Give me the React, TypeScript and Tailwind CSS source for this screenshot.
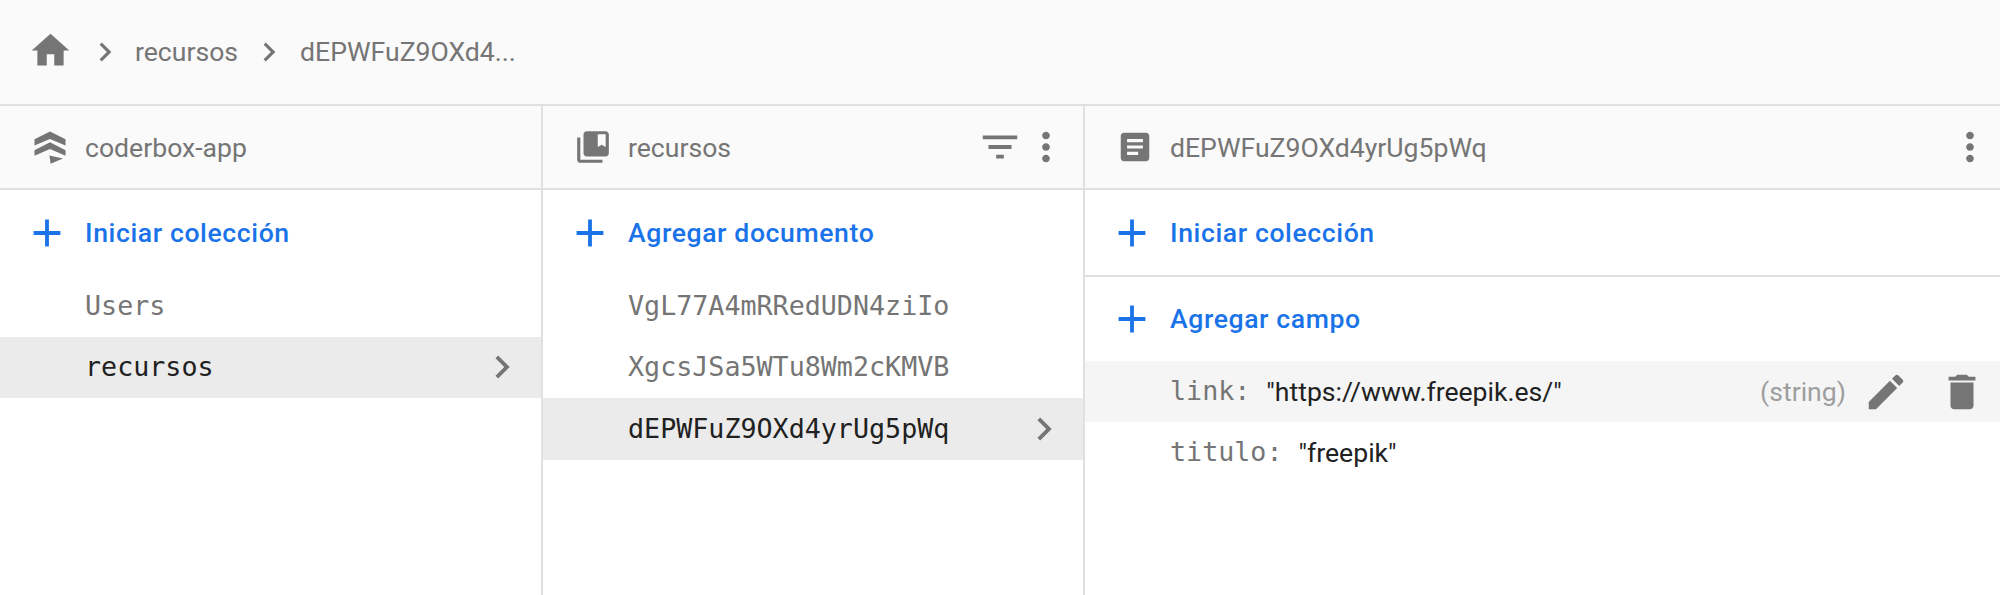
const Icon = ({ d, className }: { d: string; className: string }) => (
    <svg viewBox="0 0 24 24" fill="currentColor" className={className}>
        <path d={d} />
    </svg>
);

const HOME = "M10 20v-6h4v6h5v-8h3L12 3 2 12h3v8z";
const CHEVRON = "M10 6L8.59 7.41 13.17 12l-4.58 4.59L10 18l6-6z";
const PLUS = "M19 13h-6v6h-2v-6H5v-2h6V5h2v6h6v2z";
const COLLECTION = "M4 6H2v14c0 1.1.9 2 2 2h14v-2H4V6zm16-4H8c-1.1 0-2 .9-2 2v12c0 1.1.9 2 2 2h12c1.1 0 2-.9 2-2V4c0-1.1-.9-2-2-2zm0 10l-2.5-1.5L15 12V4h5v8z";
const FILTER = "M10 18h4v-2h-4v2zM3 6v2h18V6H3zm3 7h12v-2H6v2z";
const MORE = "M12 8c1.1 0 2-.9 2-2s-.9-2-2-2-2 .9-2 2 .9 2 2 2zm0 2c-1.1 0-2 .9-2 2s.9 2 2 2 2-.9 2-2-.9-2-2-2zm0 6c-1.1 0-2 .9-2 2s.9 2 2 2 2-.9 2-2-.9-2-2-2z";
const ARTICLE = "M19 3H5c-1.1 0-2 .9-2 2v14c0 1.1.9 2 2 2h14c1.1 0 2-.9 2-2V5c0-1.1-.9-2-2-2zm-5 14H7v-2h7v2zm3-4H7v-2h10v2zm0-4H7V7h10v2z";
const EDIT = "M3 17.25V21h3.75L17.81 9.94l-3.75-3.75L3 17.25zM20.71 7.04c.39-.39.39-1.02 0-1.41l-2.34-2.34c-.39-.39-1.02-.39-1.41 0l-1.83 1.83 3.75 3.75 1.83-1.83z";
const TRASH = "M6 19c0 1.1.9 2 2 2h8c1.1 0 2-.9 2-2V7H6v12zM19 4h-3.5l-1-1h-5l-1 1H5v2h14V4z";
// firestore logo: two chevrons and a small wedge below
const STACK = "M12 2.2l9.8 4.9v4L12 6.9 2.2 11.1v-4zM12 9l9.8 5v3.6L12 13.3 2.2 17.6V14zM11.6 17.4l8.6 1.9-7.8 3.2z";

const mono = "font-['DejaVu_Sans_Mono',monospace] text-[26.7px]";

const PanelHeader = ({ icon, title, actions }: { icon: string; title: string; actions?: React.ReactNode }) => (
    <div className="flex h-[84px] items-center border-b-2 border-[#e0e0e0] bg-[#fafafa] pl-[31px] pr-[4px] text-[#757575]">
        <Icon d={icon} className="h-[38px] w-[38px] shrink-0" />
        <span className="ml-[16px] mt-[2px] flex-1 text-[26.6px]">{title}</span>
        {actions}
    </div>
);

const AddRow = ({ label, className }: { label: string; className?: string }) => (
    <div className={`flex items-center pl-[24px] text-[#1a73e8] ${className ?? "h-[85px]"}`}>
        <Icon d={PLUS} className="h-[46px] w-[46px] shrink-0" />
        <span className="ml-[15px] text-[26.6px] font-medium tracking-[0.6px]">{label}</span>
    </div>
);

const ListRow = ({ label, selected }: { label: string; selected?: boolean }) => (
    <div className={`flex h-[61.5px] items-center justify-between pl-[85px] pr-[16px] ${mono} ${selected ? "bg-[#ebebeb] text-[#212121]" : "text-[#757575]"}`}>
        <span>{label}</span>
        {selected && <Icon d={CHEVRON} className="h-[46px] w-[46px] text-[#757575]" />}
    </div>
);

const App = () => {
    return (
        <div className="h-[595px] w-[2000px] overflow-hidden bg-white font-['Roboto',sans-serif]">
            {/* breadcrumbs */}
            <div className="flex h-[106px] items-center border-b-2 border-[#e0e0e0] bg-[#fafafa] pl-[28px] text-[26.6px] text-[#757575]">
                <Icon d={HOME} className="-mt-[3px] h-[45px] w-[45px]" />
                <Icon d={CHEVRON} className="ml-[13px] h-[38px] w-[38px]" />
                <span className="ml-[11px]">recursos</span>
                <Icon d={CHEVRON} className="ml-[12px] h-[38px] w-[38px]" />
                <span className="ml-[12px]">dEPWFuZ9OXd4...</span>
            </div>

            <div className="flex h-[489px]">
                <div className="w-[543px] border-r-2 border-[#e0e0e0]">
                    <PanelHeader icon={STACK} title="coderbox-app" />
                    <AddRow label="Iniciar colección" />
                    <ListRow label="Users" />
                    <ListRow label="recursos" selected />
                </div>

                <div className="w-[542px] border-r-2 border-[#e0e0e0]">
                    <PanelHeader
                        icon={COLLECTION}
                        title="recursos"
                        actions={
                            <div className="flex items-center pr-[10px]">
                                <Icon d={FILTER} className="h-[46px] w-[46px]" />
                                <Icon d={MORE} className="h-[46px] w-[46px]" />
                            </div>
                        }
                    />
                    <AddRow label="Agregar documento" />
                    <ListRow label="VgL77A4mRRedUDN4ziIo" />
                    <ListRow label="XgcsJSa5WTu8Wm2cKMVB" />
                    <ListRow label="dEPWFuZ9OXd4yrUg5pWq" selected />
                </div>

                <div className="flex-1">
                    <PanelHeader
                        icon={ARTICLE}
                        title="dEPWFuZ9OXd4yrUg5pWq"
                        actions={<Icon d={MORE} className="mr-[3px] h-[46px] w-[46px]" />}
                    />
                    <AddRow label="Iniciar colección" className="h-[87px] border-b-2 border-[#e0e0e0]" />
                    <AddRow label="Agregar campo" className="h-[84px]" />
                    <div className="flex h-[61px] items-center bg-[#f5f5f5] pl-[85px] pr-[15px]">
                        <span className={`${mono} text-[#757575]`}>link:</span>
                        <span className="ml-[16px] flex-1 text-[26.6px] text-[#212121]">"https://www.freepik.es/"</span>
                        <span className="text-[26.6px] text-[#9e9e9e]">(string)</span>
                        <Icon d={EDIT} className="ml-[17px] h-[46px] w-[46px] text-[#757575]" />
                        <Icon d={TRASH} className="ml-[30px] h-[46px] w-[46px] text-[#757575]" />
                    </div>
                    <div className="flex h-[61px] items-center pl-[85px]">
                        <span className={`${mono} text-[#757575]`}>titulo:</span>
                        <span className="ml-[16px] text-[26.6px] text-[#212121]">"freepik"</span>
                    </div>
                </div>
            </div>
        </div>
    );
};

export default App;
